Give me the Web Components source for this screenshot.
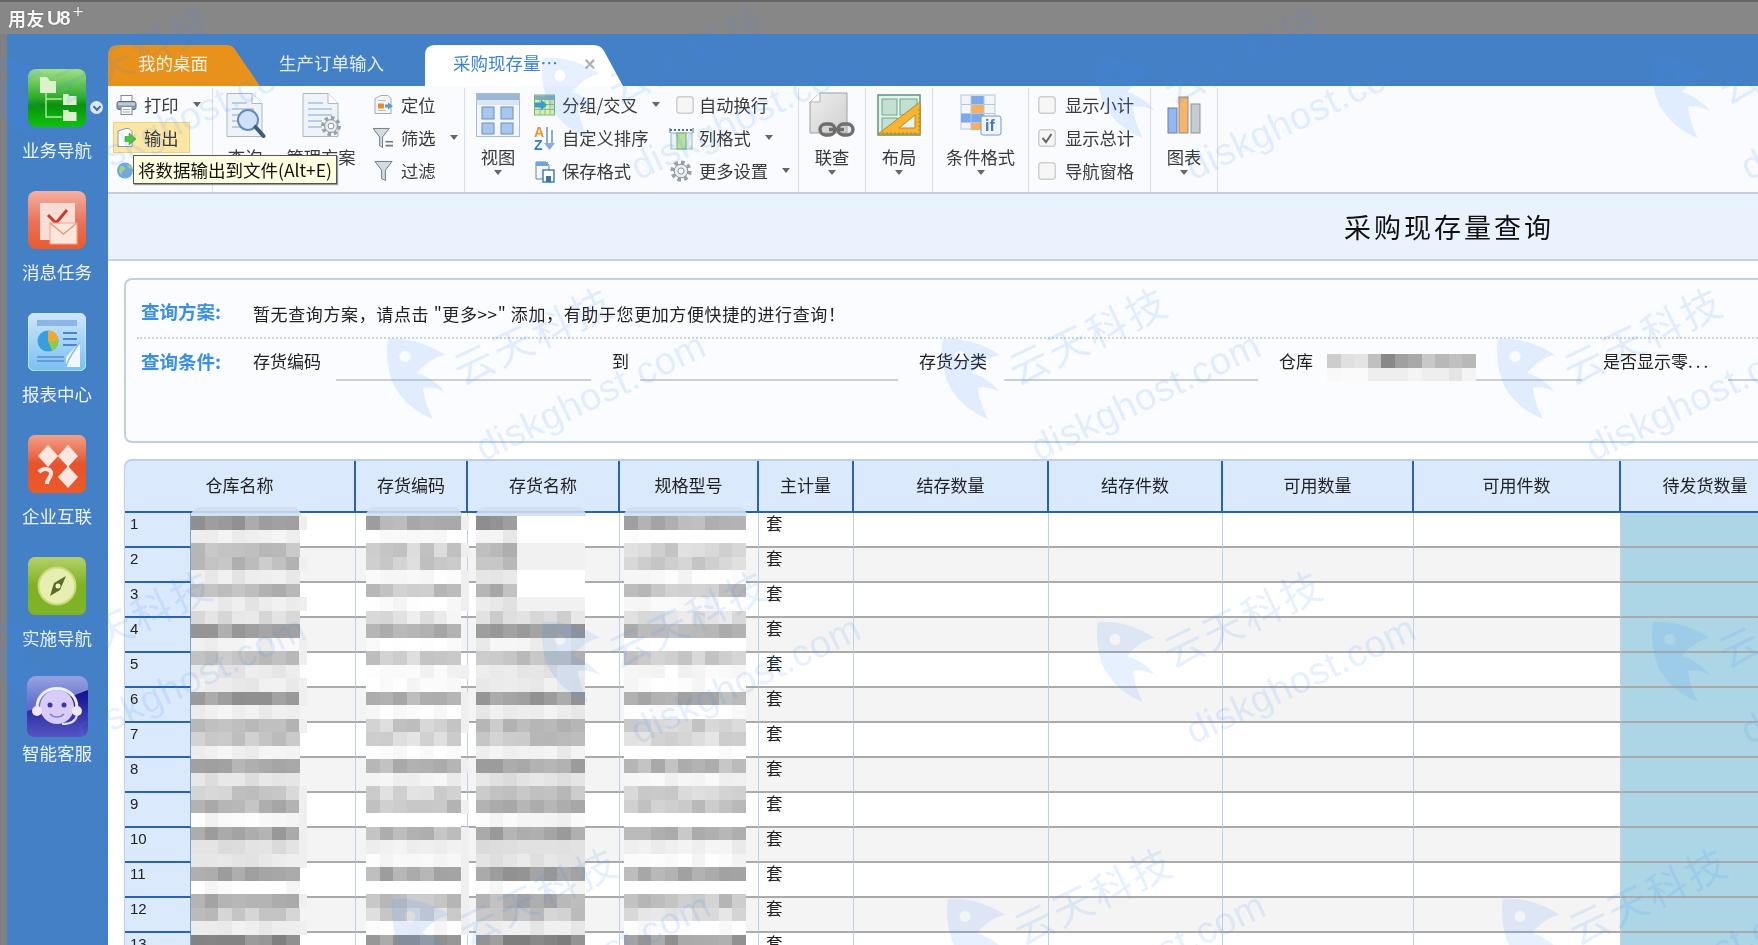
<!DOCTYPE html>
<html lang="zh">
<head>
<meta charset="utf-8">
<title>用友 U8+</title>
<style>
  html, body { margin: 0; height: 945px; overflow: hidden; }
  body { font-family: "Noto Sans CJK SC", "Liberation Sans", sans-serif; color: #333; }
</style>
</head>
<body>
<u8-app>
  <title-bar slot="title"></title-bar>
  <side-nav slot="nav">
    <nav-item icon="tree" label="业务导航" more></nav-item>
    <nav-item icon="mail" label="消息任务"></nav-item>
    <nav-item icon="report" label="报表中心"></nav-item>
    <nav-item icon="link" label="企业互联"></nav-item>
    <nav-item icon="compass" label="实施导航"></nav-item>
    <nav-item icon="agent" label="智能客服"></nav-item>
  </side-nav>

  <tab-strip>
    <u8-tab kind="home">我的桌面</u8-tab>
    <u8-tab kind="plain">生产订单输入</u8-tab>
    <u8-tab kind="active">采购现存量…</u8-tab>
  </tab-strip>

  <rib-bar>
    <rib-group w="105" pad="5">
      <rib-stack w="100">
        <rib-small icon="print" caret>打印</rib-small>
        <rib-small icon="export" hot>输出</rib-small>
        <rib-small icon="globe"></rib-small>
      </rib-stack>
    </rib-group>
    <rib-group w="252" pad="4">
      <rib-big icon="docsearch" iw="42" ih="46" w="56" label="查询"></rib-big>
      <rib-big icon="docgear" iw="42" ih="46" w="96" label="管理方案"></rib-big>
      <rib-stack w="92" style="margin-left:1px">
        <rib-small icon="locate">定位</rib-small>
        <rib-small icon="filterlist" caret>筛选</rib-small>
        <rib-small icon="filter">过滤</rib-small>
      </rib-stack>
    </rib-group>
    <rib-group w="334">
      <rib-big icon="view" iw="44" ih="44" w="66" label="视图" caret></rib-big>
      <rib-stack w="135">
        <rib-small icon="group" caret>分组/交叉</rib-small>
        <rib-small icon="sort">自定义排序</rib-small>
        <rib-small icon="savefmt">保存格式</rib-small>
      </rib-stack>
      <rib-stack w="132">
        <rib-small icon="check" iw="25" gap="5">自动换行</rib-small>
        <rib-small icon="colfmt" iw="25" gap="5" caret>列格式</rib-small>
        <rib-small icon="gear" iw="25" gap="5" caret>更多设置</rib-small>
      </rib-stack>
    </rib-group>
    <rib-group w="67"><rib-big icon="chain" iw="46" ih="46" w="66" label="联查" caret></rib-big></rib-group>
    <rib-group w="67"><rib-big icon="layout" iw="44" ih="42" w="66" label="布局" caret></rib-big></rib-group>
    <rib-group w="96"><rib-big icon="condfmt" iw="42" ih="42" w="95" label="条件格式" caret></rib-big></rib-group>
    <rib-group w="122" pad="6">
      <rib-stack w="114">
        <rib-small icon="check" iw="18" gap="9">显示小计</rib-small>
        <rib-small icon="checked" iw="18" gap="9">显示总计</rib-small>
        <rib-small icon="check" iw="18" gap="9">导航窗格</rib-small>
      </rib-stack>
    </rib-group>
    <rib-group w="67"><rib-big icon="chart" iw="34" ih="38" w="66" label="图表" caret></rib-big></rib-group>
    <rib-tip>将数据输出到文件(Alt+E)</rib-tip>
  </rib-bar>

  <report-title>采购现存量查询</report-title>

  <query-panel>
    <span slot="plan">暂无查询方案，请点击 "更多&gt;&gt;" 添加，有助于您更加方便快捷的进行查询！</span>
    <query-field slot="field" lw="83" fw="255">存货编码</query-field>
    <query-field slot="field" lw="28" fw="258">到</query-field>
    <query-field slot="field" lw="85" fw="254">存货分类</query-field>
    <query-field slot="field" lw="55" fw="248">仓库
      <mosaic-patch slot="over" style="--x:48px;--y:8px" rows="cc e0 e4 c0 88 a0 a8 c8 b8 c0 b8|f8 fa fa ee ee ee f4 ee ee e4 f4"></mosaic-patch>
    </query-field>
    <query-field slot="field" lw="125" fw="60">是否显示零<span style="letter-spacing:3px">...</span></query-field>
  </query-panel>

  <data-grid>
    <mosaic-patch style="--x:65px;--y:55px" cols="8" tone="0" seed="11" smudge></mosaic-patch>
    <mosaic-patch style="--x:240px;--y:55px" cols="7" tone="14" seed="29" smudge></mosaic-patch>
    <mosaic-patch style="--x:350px;--y:55px" cols="8" tone="-2" seed="47" clear="3"></mosaic-patch>
    <mosaic-patch style="--x:498px;--y:55px" cols="9" tone="16" seed="73"></mosaic-patch>
  </data-grid>

  <water-mark slot="mark"></water-mark>
</u8-app>

<script>
// icons for the left rail and the ribbon
const gearSvg = (cx, cy, r) => `
  <circle cx="${cx}" cy="${cy}" r="${r}" fill="none" stroke="#98a1aa" stroke-width="${r * 0.5}" stroke-dasharray="${r * 0.42} ${r * 0.36}"/>
  <circle cx="${cx}" cy="${cy}" r="${r * 0.8}" fill="#e8ecef" stroke="#8b949d"/>
  <circle cx="${cx}" cy="${cy}" r="${r * 0.36}" fill="#fff" stroke="#8b949d"/>`;

const page = `<path d="M3 1.5h25l10 10v33H3z" fill="#eef3fa" stroke="#a9b7c6"/><path d="M28 1.5v10h10" fill="#fff" stroke="#a9b7c6"/>`;

const ICONS = {
  print: `<svg viewBox="0 0 21 21"><rect x="5" y="1" width="11" height="7" fill="#fff" stroke="#7b8b9c"/><rect x="1" y="7" width="19" height="8" rx="2" fill="#8b9db0" stroke="#5a6b7d"/><rect x="2" y="8" width="17" height="3" fill="#bccad6"/><rect x="5" y="12" width="11" height="8" fill="#f4f6f8" stroke="#7b8b9c"/><path d="M7 15h7M7 17.5h7" stroke="#a3aeb8"/></svg>`,
  export: `<svg viewBox="0 0 21 21"><path d="M2 3.5L10 1h3l3 3v15H2z" fill="#fff" stroke="#8b99a8"/><polygon points="9,9 13,9 13,5.5 20,11.5 13,17.5 13,14 9,14" fill="#52c241" stroke="#2f9a2a" stroke-width=".6"/></svg>`,
  globe: `<svg viewBox="0 0 21 21"><circle cx="9" cy="10" r="8" fill="#6fa9de"/><path d="M4 6c3-1 5 0 5 2s-3 2-3 5-2 0-3-2zM11 4c2 0 4 1 5 4-2 0-4 0-5-4z" fill="#a3cf87"/></svg>`,
  docsearch: `<svg viewBox="0 0 42 46">${page}<path d="M8 11h15M8 17h22M8 23h8M8 29h6M8 35h8" stroke="#a7c0dc" stroke-width="1.6"/><circle cx="24" cy="28" r="10" fill="#cfe2fa" stroke="#6a8ab0" stroke-width="2"/><path d="M31.5 35l8 9" stroke="#3d5a7a" stroke-width="4" stroke-linecap="round"/></svg>`,
  docgear: `<svg viewBox="0 0 42 46">${page}<path d="M8 11h15M8 17h24M8 23h24M8 29h14M8 35h14" stroke="#a7c0dc" stroke-width="1.6"/>${gearSvg(31, 34, 8)}</svg>`,
  locate: `<svg viewBox="0 0 21 21"><path d="M2 4l6-3h7l3 3v15H2z" fill="#f4f6f8" stroke="#a0adb9"/><rect x="5" y="9" width="6" height="5" fill="#e88f24"/><path d="M5 6h8M5 16h8" stroke="#b4c0cc"/><polygon points="20,11.5 15,8 15,10 12,10 12,13 15,13 15,15" fill="#5d9bd8"/></svg>`,
  filterlist: `<svg viewBox="1 1 22 22"><path d="M1 2h17l-7 9v11l-3-2v-9z" fill="#d4dae1" stroke="#6d7884"/><path d="M14 16h8M14 20h8" stroke="#6d7884" stroke-width="1.6"/></svg>`,
  filter: `<svg viewBox="1 1 22 22"><path d="M3 2h18l-7 9v11l-4-2v-9z" fill="#d4dae1" stroke="#6d7884"/></svg>`,
  view: `<svg viewBox="0 0 44 44"><rect x=".5" y=".5" width="43" height="43" fill="#f3f6fa" stroke="#a9bdd6"/><rect x="1" y="1" width="42" height="6" fill="#9db6d4"/><rect x="1" y="7" width="42" height="5" fill="#dbe5f2"/><g fill="#a9c6ee" stroke="#6c8fbd"><rect x="6" y="14" width="12" height="12"/><rect x="25" y="14" width="12" height="12"/><rect x="6" y="30" width="12" height="11"/><rect x="25" y="30" width="12" height="11"/></g></svg>`,
  group: `<svg viewBox="0 0 21 21"><rect x=".5" y=".5" width="20" height="20" fill="#d4ecbe" stroke="#7db860"/><rect x="1" y="1" width="19" height="4" fill="#7fa8dc"/><path d="M6 1v19M11 1v19M16 1v19M1 5h19M1 10h19M1 15h19" stroke="#7db860" stroke-width=".8"/><polygon points="1,8 7,8 7,5 13,10.500 7,16 7,13 1,13" fill="#3a9ad4"/></svg>`,
  sort: `<svg viewBox="0 0 21 24"><text x="0" y="11" font-family="Liberation Sans" font-weight="700" font-size="14" fill="#ec9424">A</text><text x="0" y="24" font-family="Liberation Sans" font-weight="700" font-size="14" fill="#2f7cc8">Z</text><path d="M13 1v18M18 4v15" stroke="#8aaed8" stroke-width="2"/><path d="M10 17l5.500 7 5.500-7z" fill="#8aaed8"/></svg>`,
  savefmt: `<svg viewBox="0 0 21 24"><path d="M2 3h10l3 3v14H2z" fill="#f4f6f8" stroke="#5f86ae"/><rect x="2" y="3" width="12" height="4" fill="#6ea4da"/><rect x="9" y="11" width="11" height="12" fill="#fff" stroke="#3f74aa" stroke-width="1.4"/><rect x="12" y="17" width="5" height="6" fill="#3f74aa"/></svg>`,
  colfmt: `<svg viewBox="0 0 25 24"><path d="M1 4h23" stroke="#4f6f8f" stroke-dasharray="2 2" stroke-width="2"/><path d="M1 2v5M24 2v5" stroke="#4f6f8f"/><rect x="2" y="7" width="21" height="16" fill="#e8f0fa" stroke="#9ab4d2"/><rect x="8" y="7" width="9" height="16" fill="#b9e09f" stroke="#80ad68"/></svg>`,
  gear: `<svg viewBox="0 0 25 24">${gearSvg(12, 12, 8.500)}</svg>`,
  check: `<svg viewBox="0 0 18 18"><rect x=".75" y=".75" width="16.500" height="16.500" rx="3" fill="#f6f6f6" stroke="#cfcfcf" stroke-width="1.500"/></svg>`,
  checked: `<svg viewBox="0 0 18 18"><rect x=".75" y=".75" width="16.500" height="16.500" rx="3" fill="#f6f6f6" stroke="#cfcfcf" stroke-width="1.500"/><path d="M4.500 9l3.500 4 5.500-8" fill="none" stroke="#666" stroke-width="2"/></svg>`,
  chain: `<svg viewBox="0 0 46 46"><defs><linearGradient id="p" x1="0" y1="0" x2="1" y2="1"><stop offset="0" stop-color="#efefef"/><stop offset="1" stop-color="#cfcfcf"/></linearGradient></defs><path d="M1 10L11 1h27v40H1z" fill="url(#p)" stroke="#a0a0a0"/><path d="M1 10h10V1" fill="#fafafa" stroke="#b0b0b0"/><g fill="#c8c8c8" stroke="#6e6e6e" stroke-width="3.400"><rect x="11" y="32" width="15" height="11" rx="5.500" fill-opacity=".35"/><rect x="29" y="32" width="15" height="11" rx="5.500" fill-opacity=".35"/></g><path d="M20 37.500h15" stroke="#6e6e6e" stroke-width="3.500"/></svg>`,
  layout: `<svg viewBox="0 0 44 42"><rect x="1" y="1" width="42" height="40" fill="#e6f3ec" stroke="#5f9f82" stroke-width="1.600"/><g fill="#c2e0d2" stroke="#6aa78a"><rect x="5" y="5" width="15" height="16"/><rect x="23" y="5" width="17" height="16"/><rect x="5" y="24" width="15" height="13"/></g><path d="M43 8V40H1z" fill="#f6b433" stroke="#c4861c"/><path d="M38 21V34H22z" fill="#e6f3ec" stroke="#c4861c"/><path d="M6 40v-2M10 40v-2M14 40v-2M18 40v-2M22 40v-2M26 40v-2M30 40v-2M34 40v-2M38 40v-2M43 36h-2M43 32h-2M43 28h-2M43 24h-2M43 20h-2M43 16h-2" stroke="#b07a18" stroke-width=".8"/></svg>`,
  condfmt: `<svg viewBox="0 0 42 42"><rect x="1" y="1" width="34" height="34" fill="#f2f5fa" stroke="#b8c8dc"/><rect x="11" y="2" width="13" height="8" fill="#79aaee"/><rect x="11" y="11" width="13" height="8" fill="#f4b060"/><rect x="1" y="20" width="23" height="8" fill="#79aaee"/><rect x="11" y="29" width="13" height="7" fill="#f4b060"/><path d="M11 1v35M24 1v35M1 10.500h34M1 19.500h34M1 28.500h34" stroke="#b8c8dc"/><rect x="21" y="22" width="20" height="19" rx="2" fill="#eef4fb" stroke="#7d9cc0"/><text x="25" y="37" font-family="Liberation Sans" font-weight="700" font-size="16" fill="#4d79ab">if</text></svg>`,
  chart: `<svg viewBox="0 0 34 38"><rect x="1" y="12" width="9" height="25" fill="#8fb8f4" stroke="#6f7f92"/><rect x="12" y="1" width="9" height="36" fill="#f6b56c" stroke="#9a8a72"/><rect x="24" y="8" width="9" height="29" fill="#c6ccd0" stroke="#8b9398"/></svg>`,

  tree: `<svg viewBox="0 0 58 58"><defs><linearGradient id="g" x1="0" y1="0" x2="0" y2="1"><stop offset="0" stop-color="#a4e088"/><stop offset=".5" stop-color="#2bac28"/><stop offset=".62" stop-color="#08920c"/><stop offset="1" stop-color="#0ec20c"/></linearGradient></defs><rect width="58" height="58" rx="8" fill="url(#g)"/><path d="M12 8h7l3 4h6v12H12z" fill="#dcf2cc"/><path d="M18 24v24h16M18 30h16" fill="none" stroke="#b6e6a0" stroke-width="1.400"/><path d="M35 25h5l1.500 2h7v9H35z" fill="#dcf2cc"/><path d="M35 41h5l1.500 2h7v9H35z" fill="#dcf2cc"/></svg>`,
  mail: `<svg viewBox="0 0 58 58"><defs><linearGradient id="g" x1="0" y1="0" x2="0" y2="1"><stop offset="0" stop-color="#f4b0a0"/><stop offset=".55" stop-color="#e97058"/><stop offset="1" stop-color="#ea5a2e"/></linearGradient></defs><rect width="58" height="58" rx="8" fill="url(#g)"/><rect x="12" y="12" width="35" height="37" fill="#f8dcd6"/><path d="M20 24l8 8 11-13" fill="none" stroke="#cf3a2a" stroke-width="3"/><rect x="22" y="32" width="27" height="21" fill="#fbe6dc" stroke="#eda58f"/><path d="M22 32l13.500 11L49 32" fill="none" stroke="#e79a84" stroke-width="1.500"/></svg>`,
  report: `<svg viewBox="0 0 58 58"><defs><linearGradient id="g" x1="0" y1="0" x2="0" y2="1"><stop offset="0" stop-color="#cfe6fb"/><stop offset="1" stop-color="#78c0f2"/></linearGradient></defs><rect width="58" height="58" rx="7" fill="url(#g)" stroke="#d9f0fb"/><rect x="9" y="7" width="40" height="6" fill="#8cb6ea"/><path d="M35 20h14M35 26h14M35 32h14" stroke="#4e83c8" stroke-width="2"/><path d="M9 44h27M9 48h27" stroke="#5c8cce" stroke-width="1.500"/><circle cx="20" cy="28" r="10.500" fill="#3a9de0"/><path d="M20 28V17.500A10.500 10.500 0 0 1 30.500 28z" fill="#f0a830"/><path d="M20 28h10.500A10.500 10.500 0 0 1 24 37.700z" fill="#8dcb50"/><path d="M38 54V44l14-15v25z" fill="#f1f7fc"/><path d="M38 54c2-9 9-17 14-25" fill="none" stroke="#8cc0e4" stroke-width="1.500"/></svg>`,
  link: `<svg viewBox="0 0 58 58"><defs><linearGradient id="g" x1="0" y1="0" x2="0" y2="1"><stop offset="0" stop-color="#f2a08a"/><stop offset=".5" stop-color="#e6532e"/><stop offset="1" stop-color="#ec5a28"/></linearGradient></defs><rect width="58" height="58" rx="7" fill="url(#g)"/><g fill="#fae8e0"><polygon points="20,10 30,21 20,32 10,21"/><polygon points="40,10 50,21 40,32 30,21"/><polygon points="40,31 50,42 40,53 30,42"/></g><path d="M11 37c5-5 13-3 12 2s-4 5-4 10" fill="none" stroke="#fae8e0" stroke-width="4"/></svg>`,
  compass: `<svg viewBox="0 0 58 58"><defs><linearGradient id="g" x1="0" y1="0" x2="0" y2="1"><stop offset="0" stop-color="#b4d06a"/><stop offset=".5" stop-color="#7fb020"/><stop offset="1" stop-color="#80b428"/></linearGradient></defs><rect width="58" height="58" rx="7" fill="url(#g)"/><circle cx="29" cy="29" r="18.500" fill="#e6efb0" stroke="#c6dc7c" stroke-width="2"/><polygon points="38,19 32,33 22,39 26,26" fill="#5a6c28"/><circle cx="30" cy="29" r="2.500" fill="#f2f6d0"/></svg>`,
  agent: `<svg viewBox="0 0 61 61"><defs><linearGradient id="g" x1="0" y1="0" x2="0" y2="1"><stop offset="0" stop-color="#98a4e0"/><stop offset=".45" stop-color="#6670cc"/><stop offset="1" stop-color="#5a5ac8"/></linearGradient><linearGradient id="d" x1="0" y1="0" x2="0" y2="1"><stop offset="0" stop-color="#10108c"/><stop offset="1" stop-color="#5654c4"/></linearGradient></defs><rect width="61" height="61" rx="9" fill="url(#g)"/><path d="M61 14C40 22 20 30 0 35V54Q0 61 9 61H52Q61 61 61 52z" fill="url(#d)"/><circle cx="30" cy="31" r="17" fill="#d8ccf8"/><path d="M10 32c0-26 40-26 40 0" fill="none" stroke="#eef0fb" stroke-width="3"/><circle cx="10" cy="35" r="5" fill="#efe8fb"/><circle cx="50" cy="35" r="5" fill="#efe8fb"/><circle cx="23" cy="29" r="2.500" fill="#3a38a6"/><circle cx="37" cy="29" r="2.500" fill="#3a38a6"/><path d="M23 38c4 4 10 4 14 0" fill="none" stroke="#8a78d6" stroke-width="1.600"/><path d="M50 39c-1 6-7 9-15 9" fill="none" stroke="#dfe2f8" stroke-width="2"/></svg>`
};

class U8Icon extends HTMLElement {
  constructor() {
    super();
    this.attachShadow({ mode: "open" });
    const w = this.getAttribute("w") || 21;
    const h = this.getAttribute("h") || w;
    this.shadowRoot.innerHTML = `
      <style>
        :host { display: inline-flex; width: ${w}px; height: ${h}px; flex: none; }
        svg { width: 100%; height: 100%; display: block; }
      </style>
      ${ICONS[this.getAttribute("name")] || ""}`;
  }
}
customElements.define("u8-icon", U8Icon);

class U8App extends HTMLElement {
  constructor() {
    super();
    this.attachShadow({ mode: "open" });
    this.shadowRoot.innerHTML = `
      <style>
        :host { display: grid; grid-template-rows: 34px 1fr; height: 945px; width: 1758px; position: relative; overflow: hidden; filter: blur(.35px); }
        .body { display: grid; grid-template-columns: 108px 1fr; min-height: 0; overflow: hidden; }
        .main { background: #fff; min-width: 0; display: flex; flex-direction: column; overflow: hidden; }
      </style>
      <slot name="title"></slot>
      <div class="body">
        <slot name="nav"></slot>
        <div class="main"><slot></slot></div>
      </div>
      <slot name="mark"></slot>`;
  }
}
customElements.define("u8-app", U8App);

class TitleBar extends HTMLElement {
  constructor() {
    super();
    this.attachShadow({ mode: "open" });
    this.shadowRoot.innerHTML = `
      <style>
        :host { display: flex; align-items: center; background: #878787; border-top: 2px solid #666; box-sizing: border-box; padding: 0 0 0 8px; color: #f6f6f6; font-weight: 700; text-shadow: 0 0 1px #333; }
        .cn { font-size: 18px; letter-spacing: .5px; }
        .u8 { font: 700 20px "Liberation Sans", sans-serif; margin-left: 2px; letter-spacing: -2px; }
        sup { font: 400 19px "Liberation Sans", sans-serif; position: relative; top: -6px; margin-left: 4px; }
      </style>
      <span class="cn">用友</span><span class="u8">U8</span><sup>+</sup>`;
  }
}
customElements.define("title-bar", TitleBar);

class SideNav extends HTMLElement {
  constructor() {
    super();
    this.attachShadow({ mode: "open" });
    this.shadowRoot.innerHTML = `
      <style>
        :host { display: flex; flex-direction: column; background: #4480c6; border-left: 7px solid #808080; box-sizing: border-box; padding-top: 35px; }
      </style>
      <slot></slot>`;
  }
}
customElements.define("side-nav", SideNav);

class NavItem extends HTMLElement {
  constructor() {
    super();
    this.attachShadow({ mode: "open" });
    const big = this.getAttribute("icon") === "agent";
    const more = this.hasAttribute("more");
    this.shadowRoot.innerHTML = `
      <style>
        :host { display: flex; flex-direction: column; align-items: center; height: 122px; width: 100px; position: relative; ${big ? "margin-top: -3px;" : ""} }
        .lb { color: #eef4fb; font-size: 17.500px; line-height: 24px; margin-top: ${big ? 4 : 11}px; white-space: nowrap; }
        .more { position: absolute; left: 83px; top: 32px; width: 13px; height: 13px; border-radius: 50%; background: #dfe8f2; }
        .more::after { content: ""; position: absolute; left: 3.500px; top: 3px; width: 4px; height: 4px; border: solid #3a6ca8; border-width: 0 2px 2px 0; transform: rotate(45deg); }
      </style>
      <u8-icon name="${this.getAttribute("icon")}" w="${big ? 61 : 58}"></u8-icon>
      <div class="lb">${this.getAttribute("label")}</div>
      ${more ? '<div class="more"></div>' : ""}`;
  }
}
customElements.define("nav-item", NavItem);

class TabStrip extends HTMLElement {
  constructor() {
    super();
    this.attachShadow({ mode: "open" });
    this.shadowRoot.innerHTML = `
      <style>
        :host { display: flex; height: 52px; flex: none; box-sizing: border-box; padding-top: 11px; background: #4480c6; }
      </style>
      <slot></slot>`;
  }
}
customElements.define("tab-strip", TabStrip);

class U8Tab extends HTMLElement {
  constructor() {
    super();
    this.attachShadow({ mode: "open" });
    const kind = this.getAttribute("kind");
    const styles = {
      home: `width: 152px; padding-left: 30px; background: #e8921c; color: #fdf3e2; clip-path: path("M0 41V10Q0 0 10 0H119Q125 0 128 6L152 41Z");`,
      plain: `width: 165px; padding-left: 19px; color: #e4eefa;`,
      active: `width: 198px; padding-left: 28px; background: #fff; color: #3a84d6; clip-path: path("M0 41V10Q0 0 10 0H168Q176 0 179 6L198 41Z");`
    };
    this.shadowRoot.innerHTML = `
      <style>
        :host { display: flex; align-items: center; height: 41px; box-sizing: border-box; padding-bottom: 7px; font-size: 17.500px; position: relative; white-space: nowrap; ${styles[kind]} }
        .x { position: absolute; left: 159px; top: 8px; color: #aeb4ba; font: 700 20px "Liberation Sans", sans-serif; }
      </style>
      <slot></slot>${kind === "active" ? '<span class="x">×</span>' : ""}`;
  }
}
customElements.define("u8-tab", U8Tab);

class RibBar extends HTMLElement {
  constructor() {
    super();
    this.attachShadow({ mode: "open" });
    this.shadowRoot.innerHTML = `
      <style>
        :host { display: flex; flex: none; height: 108px; box-sizing: border-box; background: #f9fbff; border-bottom: 2px solid #c3cfe0; padding-top: 2px; position: relative; font-size: 17.300px; color: #3a3a3a; }
      </style>
      <slot></slot>`;
  }
}
customElements.define("rib-bar", RibBar);

class RibGroup extends HTMLElement {
  constructor() {
    super();
    this.attachShadow({ mode: "open" });
    this.shadowRoot.innerHTML = `
      <style>
        :host { display: flex; flex: none; box-sizing: border-box; width: ${this.getAttribute("w")}px; padding-left: ${this.getAttribute("pad") || 0}px; border-right: 1px solid #d8dfe8; height: 104px; }
      </style>
      <slot></slot>`;
  }
}
customElements.define("rib-group", RibGroup);

class RibStack extends HTMLElement {
  constructor() {
    super();
    this.attachShadow({ mode: "open" });
    this.shadowRoot.innerHTML = `
      <style>
        :host { display: flex; flex-direction: column; flex: none; width: ${this.getAttribute("w")}px; }
      </style>
      <slot></slot>`;
  }
}
customElements.define("rib-stack", RibStack);

const caretCss = `.caret { width: 0; height: 0; border: 4px solid transparent; border-top: 5px solid #666; border-bottom: 0; flex: none; }`;

class RibSmall extends HTMLElement {
  constructor() {
    super();
    this.attachShadow({ mode: "open" });
    const iw = this.getAttribute("iw") || 21;
    const gap = this.getAttribute("gap") || 7;
    const hot = this.hasAttribute("hot");
    const ih = this.getAttribute("iw") === "18" ? 18 : (this.getAttribute("icon") === "check" ? 18 : 24);
    const checkW = this.getAttribute("icon") === "check" && iw === "25" ? 18 : iw;
    this.shadowRoot.innerHTML = `
      <style>
        :host { display: flex; flex: none; align-items: center; height: 33px; box-sizing: border-box; padding-left: 3px; white-space: nowrap; }
        .ic { width: ${iw}px; display: flex; justify-content: ${checkW != iw ? "flex-end" : "center"}; margin-right: ${gap}px; flex: none; }
        ${hot ? `:host { width: 77px; height: 31px; margin: 1px 0; background: #fce6a6; box-shadow: inset 0 0 0 1px #f0d27c; }` : ""}
        ${caretCss}
        .caret { margin-left: 14px; }
      </style>
      <span class="ic"><u8-icon name="${this.getAttribute("icon")}" w="${checkW}" h="${ih}"></u8-icon></span>
      <slot></slot>
      ${this.hasAttribute("caret") ? '<i class="caret"></i>' : ""}`;
  }
}
customElements.define("rib-small", RibSmall);

class RibBig extends HTMLElement {
  constructor() {
    super();
    this.attachShadow({ mode: "open" });
    this.shadowRoot.innerHTML = `
      <style>
        :host { display: flex; flex-direction: column; align-items: center; flex: none; width: ${this.getAttribute("w")}px; padding-top: 2px; }
        .ic { height: 50px; display: flex; align-items: center; }
        .lb { line-height: 22px; margin-top: 6px; white-space: nowrap; }
        ${caretCss}
        .caret { margin-top: 2px; }
      </style>
      <div class="ic"><u8-icon name="${this.getAttribute("icon")}" w="${this.getAttribute("iw")}" h="${this.getAttribute("ih")}"></u8-icon></div>
      <div class="lb">${this.getAttribute("label")}</div>
      ${this.hasAttribute("caret") ? '<i class="caret"></i>' : ""}`;
  }
}
customElements.define("rib-big", RibBig);

// tooltip of the hovered button, lies over the ribbon
class RibTip extends HTMLElement {
  constructor() {
    super();
    this.attachShadow({ mode: "open" });
    this.shadowRoot.innerHTML = `
      <style>
        :host { position: absolute; left: 25px; top: 69px; height: 29px; width: 204px; box-sizing: border-box; display: flex; align-items: center; justify-content: center; background: #ffffe1; border: 1px solid #555; box-shadow: 1px 1px 1px #999; color: #111; font-size: 17.500px; white-space: nowrap; }
      </style>
      <slot></slot>`;
  }
}
customElements.define("rib-tip", RibTip);

class ReportTitle extends HTMLElement {
  constructor() {
    super();
    this.attachShadow({ mode: "open" });
    this.shadowRoot.innerHTML = `
      <style>
        :host { display: flex; flex: none; align-items: center; height: 67px; box-sizing: border-box; padding-left: 1236px; background: #eaf2fd; border-bottom: 2px solid #c5d2e2; color: #111; font-size: 27px; letter-spacing: 3px; white-space: nowrap; }
      </style>
      <slot></slot>`;
  }
}
customElements.define("report-title", ReportTitle);

class QueryPanel extends HTMLElement {
  constructor() {
    super();
    this.attachShadow({ mode: "open" });
    this.shadowRoot.innerHTML = `
      <style>
        :host { display: block; flex: none; height: 165px; box-sizing: border-box; margin: 17px 0 0 16px; background: #fafcff; border: 2px solid #bed0e6; border-right: 0; border-radius: 8px 0 0 8px; font-size: 17px; color: #222; }
        .row { display: flex; white-space: nowrap; }
        .r1 { height: 57px; align-items: center; padding: 7px 0 0 15px; box-sizing: border-box; }
        .r1 b { margin-top: -3px; }
        .r1 ::slotted(span) { letter-spacing: .62px; margin-top: 2px; }
        .r2 { border-top: 2px dotted #cdd3da; margin-left: 11px; padding: 7px 0 0 4px; height: 42px; align-items: flex-start; }
        b { color: #3a8fe6; font-size: 18.500px; width: 112px; flex: none; }
        .r2 .fields { display: flex; gap: 21px; }
        .r2 b { padding-top: 2px; margin-right: 0; }
      </style>
      <div class="row r1"><b>查询方案:</b><slot name="plan"></slot></div>
      <div class="row r2"><b>查询条件:</b><div class="fields"><slot name="field"></slot></div></div>`;
  }
}
customElements.define("query-panel", QueryPanel);

class QueryField extends HTMLElement {
  constructor() {
    super();
    this.attachShadow({ mode: "open" });
    this.shadowRoot.innerHTML = `
      <style>
        :host { display: flex; flex: none; height: 35px; position: relative; }
        .lb { width: ${this.getAttribute("lw")}px; line-height: 29px; height: 33px; }
        .ln { width: ${this.getAttribute("fw")}px; height: 33px; border-bottom: 2px solid #cfcfcf; }
      </style>
      <div class="lb"><slot></slot></div><div class="ln"></div><slot name="over"></slot>`;
  }
}
customElements.define("query-field", QueryField);

const COLS = [
  ["仓库名称", 231], ["存货编码", 112], ["存货名称", 152], ["规格型号", 139], ["主计量", 95],
  ["结存数量", 195], ["结存件数", 174], ["可用数量", 191], ["可用件数", 207], ["待发货数量", 170]
];

class DataGrid extends HTMLElement {
  constructor() {
    super();
    this.attachShadow({ mode: "open" });
    const tpl = `66px 165px ${COLS.slice(1).map((c) => c[1] + "px").join(" ")}`;
    const head = COLS.map((c) => `<div class="h">${c[0]}</div>`).join("");
    let rows = "";
    for (let i = 1; i <= 13; i++) {
      const cells = COLS.slice(1).map((c, k) => `<div class="c ${k === COLS.length - 2 ? "due" : ""}">${k === 3 ? "套" : ""}</div>`).join("");
      rows += `<div class="r ${i % 2 ? "" : "alt"}"><div class="n">${i}</div><div class="c"></div>${cells}</div>`;
    }
    this.shadowRoot.innerHTML = `
      <style>
        :host { display: block; flex: none; margin: 16px 0 0 16px; position: relative; border: 2px solid #bed0e6; border-width: 2px 0 0 2px; border-radius: 8px 0 0 0; color: #222; }
        .hd { display: grid; grid-template-columns: ${COLS.map((c) => c[1] + "px").join(" ")}; height: 52px; margin-left: -1px; background: #dbe9fc; border-bottom: 2px solid #2a62b0; border-radius: 8px 0 0 0; box-sizing: border-box; }
        .h { display: flex; align-items: center; justify-content: center; padding-bottom: 3px; border-right: 2px solid #2a62b0; box-sizing: border-box; font-size: 17px; white-space: nowrap; }
        .r { display: grid; grid-template-columns: ${tpl}; height: 35px; margin-left: -1px; box-sizing: border-box; background: #fff; }
        .alt { background: #f4f4f4; }
        .n { background: #dbe9fc; border-bottom: 2px solid #2a62b0; border-right: 1px solid #7f9fc8; box-sizing: border-box; padding: 0 0 0 5px; font: 15px/21px "Liberation Sans", sans-serif; }
        .c { border-bottom: 2px solid #aaa; border-right: 1px solid #bfd0e6; box-sizing: border-box; padding: 0 0 0 7px; font-size: 16.500px; line-height: 21px; }
        .due { background: #acd6e6; border-right: 0; }
      </style>
      <div class="hd">${head}</div>
      ${rows}
      <slot></slot>`;
  }
}
customElements.define("data-grid", DataGrid);

// the pixelated smear that hides the private columns: one band value per mosaic row
const BANDS = [0xa0, 0xf0, 0xc0, 0xc0, 0xea, 0xb4, 0xea, 0xd8, 0xa4, 0xf2, 0xc0, 0xe8, 0xec, 0xa0, 0xee, 0xc0,
  0xc8, 0xf0, 0xa8, 0xe4, 0xc8, 0xb4, 0xf8, 0xa8, 0xe0, 0xe8, 0xa0, 0xfc, 0xb4, 0xc8, 0xec, 0x90];

class MosaicPatch extends HTMLElement {
  constructor() {
    super();
    this.attachShadow({ mode: "open" });
    const S = 13.5;
    let seed = Number(this.getAttribute("seed")) || 1;
    const rnd = () => { seed = (seed * 16807) % 2147483647; return seed / 2147483647; };
    const grey = (v) => { const n = Math.max(0, Math.min(255, Math.round(v))); return `rgb(${n},${n},${n})`; };
    let rects = "";
    let w, h;
    if (this.hasAttribute("rows")) {
      const rows = this.getAttribute("rows").split("|").map((r) => r.split(" ").map((v) => parseInt(v, 16)));
      rows.forEach((r, y) => r.forEach((v, x) => { rects += `<rect x="${x * S}" y="${y * S}" width="${S}" height="${S}" fill="${grey(v)}"/>`; }));
      w = rows[0].length * S; h = rows.length * S;
    } else {
      const cols = Number(this.getAttribute("cols"));
      const tone = Number(this.getAttribute("tone")) || 0;
      const clear = Number(this.getAttribute("clear")) || 0;
      w = (cols + 1) * S; h = BANDS.length * S;
      BANDS.forEach((b, y) => {
        for (let x = 0; x < cols; x++) {
          let v = b + tone + (rnd() - 0.5) * (b > 0xd8 ? 14 : 34);
          if (clear && y < 7 && x >= clear) v = (y === 2 || y === 3 || y === 6) ? 0xf1 : 0xff;
          rects += `<rect x="${x * S}" y="${y * S}" width="${S + .5}" height="${S + .5}" fill="${grey(v)}"/>`;
        }
        if (this.hasAttribute("smudge") && rnd() > 0.45) rects += `<rect x="${cols * S}" y="${y * S}" width="${S * .6}" height="${S + .5}" fill="#efefef"/>`;
      });
    }
    this.shadowRoot.innerHTML = `
      <style>
        :host { position: absolute; left: var(--x); top: var(--y); width: ${w}px; height: ${h}px; display: block; }
        :host::before { content: ""; position: absolute; left: 0; right: 12px; top: -9px; height: 9px; background: #cfdef0; border-radius: 9px 9px 0 0; opacity: ${this.hasAttribute("rows") ? 0 : .9}; }
        svg { display: block; }
      </style>
      <svg width="${w}" height="${h}" shape-rendering="crispEdges">${rects}</svg>`;
  }
}
customElements.define("mosaic-patch", MosaicPatch);

// watermark stamps, a free canvas over the whole window
const STAMPS = [
  [16, 97], [571, 97], [1126, 97], [1681, 97],
  [416, 378], [971, 378], [1526, 378],
  [16, 661], [571, 661], [1126, 661], [1681, 661],
  [421, 938], [976, 938], [1531, 938]
];

class WaterMark extends HTMLElement {
  constructor() {
    super();
    this.attachShadow({ mode: "open" });
    const rocket = `<svg class="rk" viewBox="0 0 62 81"><path fill-rule="evenodd" d="M3 1C22 -1 44 6 60 17C50 18 40 26 32 35C42 38 52 44 60 54C52 50 44 48 38 50C39 60 43 72 48 81C30 74 10 58 5 36C2 24 1 11 3 1ZM20 13a5.500 5.500 0 1 0 .01 0Z"/></svg>`;
    const items = STAMPS.map(([x, y]) => `
      <div class="st" style="left:${x}px;top:${y}px">${rocket}
        <span class="a">云天科技</span>
        <span class="b">diskghost.com</span>
      </div>`).join("");
    this.shadowRoot.innerHTML = `
      <style>
        :host { position: absolute; inset: 0; z-index: 50; pointer-events: none; overflow: hidden; display: block; color: rgba(60, 140, 255, .13); }
        .st { position: absolute; width: 0; height: 0; }
        .rk { position: absolute; left: -31px; top: -40px; width: 62px; height: 81px; fill: rgba(60, 140, 255, .13); overflow: visible; }
        span { position: absolute; white-space: nowrap; transform-origin: 0 50%; transform: rotate(-25.500deg); }
        .a { left: 39px; top: -34px; font-size: 40px; line-height: 54px; letter-spacing: 3px; }
        .b { left: 62px; top: 48px; font: 38px/48px "Liberation Sans", sans-serif; letter-spacing: .5px; }
      </style>
      ${items}`;
  }
}
customElements.define("water-mark", WaterMark);
</script>
</body>
</html>
